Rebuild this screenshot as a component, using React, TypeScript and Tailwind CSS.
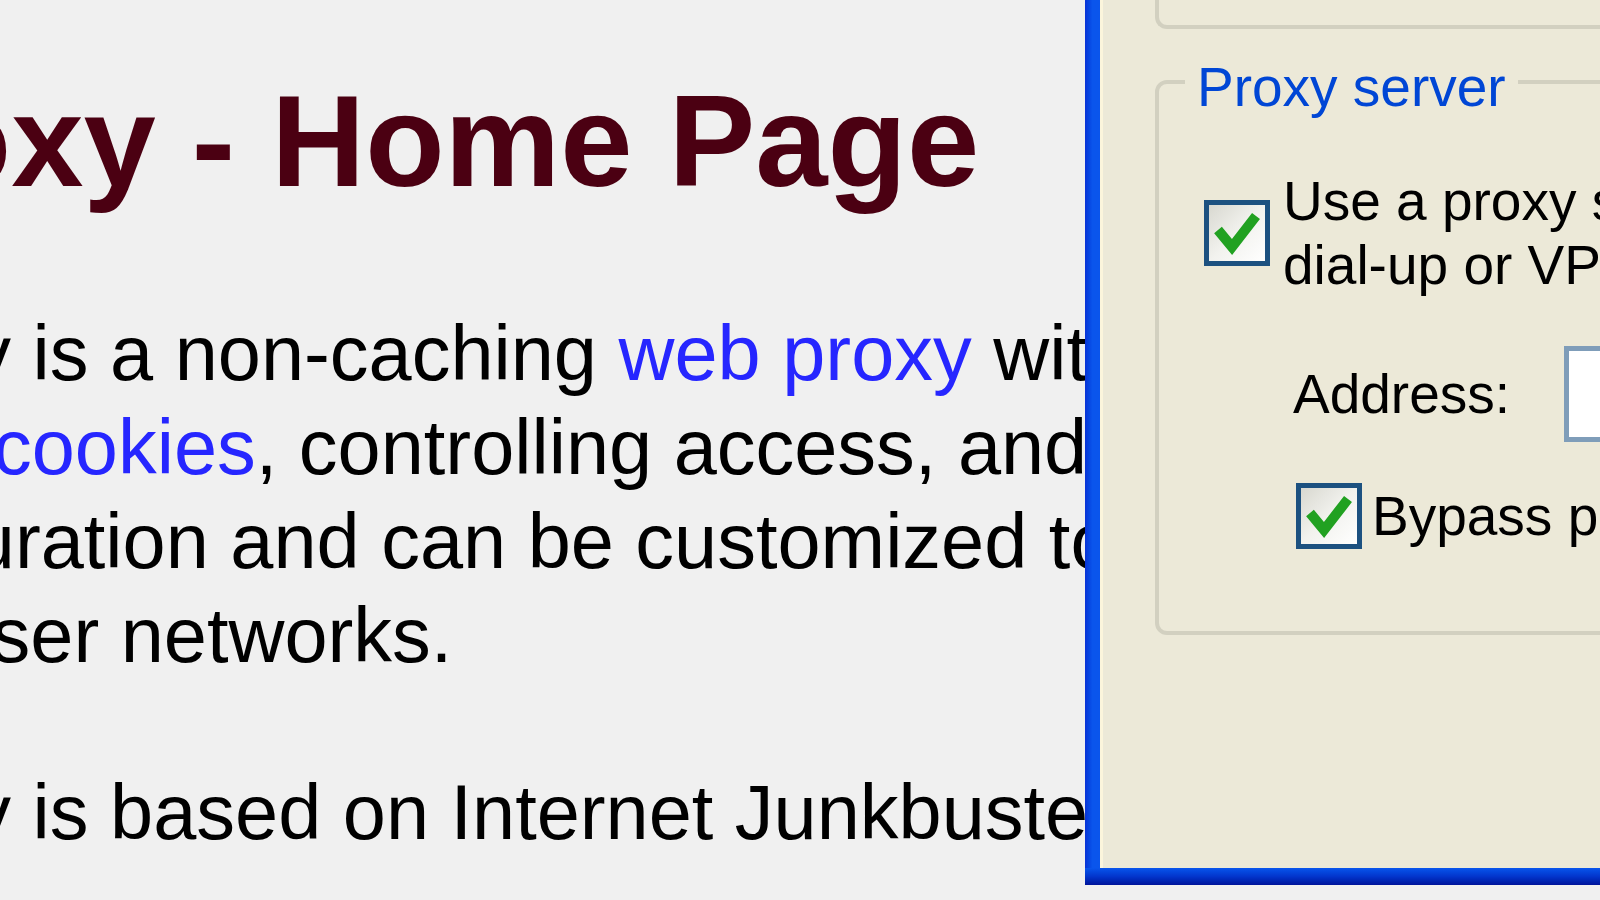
const SANS = "font-['Liberation_Sans',Arial,sans-serif]";

function XpCheckbox() {
  return (
    <div className="flex size-[66px] shrink-0 items-center justify-center border-[5px] border-[#1c5180] bg-linear-to-br from-[#d8d8d0] via-[#f2f2ee] to-white">
      <svg width="56" height="56" viewBox="0 0 56 56" fill="none">
        <polyline points="9,25 23,42 47,11" stroke="#21a121" strokeWidth="10" strokeLinejoin="miter" />
      </svg>
    </div>
  );
}

function PageText() {
  return (
    <div className={`w-[1085px] shrink-0 overflow-hidden pt-[76px] text-black ${SANS}`}>
      <h1 className="ml-[-314px] whitespace-nowrap text-[130px] font-bold leading-[130px] text-[#4b0012]">
        Privoxy - Home Page
      </h1>

      <div className="mt-[100px] text-[77.5px] leading-[94px]">
        <div className="ml-[-243px] whitespace-nowrap">
          Privoxy is a non-caching <span className="text-[#2626ff]">web proxy</span> with filtering capabilities
        </div>
        <div className="ml-[-468px] whitespace-nowrap">
          manipulating <span className="text-[#2626ff]">cookies</span>, controlling access, and removing ads
        </div>
        <div className="ml-[-235px] whitespace-nowrap">
          configuration and can be customized to suit individual needs
        </div>
        <div className="ml-[-241px] whitespace-nowrap">multi-user networks.</div>
      </div>

      <p className="ml-[-243px] mt-[83px] whitespace-nowrap text-[77.5px] leading-[94px]">
        Privoxy is based on Internet Junkbuster.
      </p>
    </div>
  );
}

function ProxyDialog() {
  return (
    <div className={`flex h-[885px] flex-1 flex-col ${SANS}`}>
      <div className="flex min-h-0 flex-1">
        {/* window frame, left edge */}
        <div className="w-[15px] shrink-0 bg-linear-to-r from-[#0832d6] via-[#0a55ec] to-[#0a55ec]" />
        <div className="w-[3px] shrink-0 bg-[#fbf5dc]" />
        <div className="min-w-0 flex-1 overflow-hidden bg-[#ece9d8] pl-[52px] text-[55px] leading-[64px] text-black">
          {/* bottom of the group above */}
          <div className="h-[29px] w-[700px] rounded-bl-[12px] border-b-4 border-l-4 border-[#d2d0c0]" />

          {/* Proxy server group */}
          <div className="relative mt-[51px] h-[555px] w-[700px] rounded-[12px] border-4 border-[#d2d0c0] pl-[45px] pt-[85px]">
            <span className="absolute left-[26px] top-[-29px] bg-[#ece9d8] px-[12px] text-[#0046d5]">Proxy server</span>

            <div className="flex items-center gap-[13px]">
              <XpCheckbox />
              <div className="whitespace-nowrap">
                <div>Use a proxy server for your LAN (These settings will not apply to</div>
                <div>dial-up or VPN connections).</div>
              </div>
            </div>

            <div className="ml-[89px] mt-[49px] flex h-[96px] items-center">
              <span className="w-[271px] shrink-0 whitespace-nowrap">Address:</span>
              <div className="h-[96px] w-[400px] shrink-0 border-[5px] border-[#7f9db9] bg-white" />
            </div>

            <div className="ml-[92px] mt-[41px] flex items-center gap-[10px]">
              <XpCheckbox />
              <span className="whitespace-nowrap">Bypass proxy server for local addresses</span>
            </div>
          </div>
        </div>
      </div>
      {/* window frame, bottom edge */}
      <div className="flex h-[17px] shrink-0">
        <div className="h-full flex-1 bg-linear-to-b from-[#0a55ec] via-[#0335cc] to-[#00139a]" />
      </div>
    </div>
  );
}

export default function App() {
  return (
    <div className="flex h-[900px] w-[1600px] overflow-hidden bg-[#f0f0f0]">
      <PageText />
      <ProxyDialog />
    </div>
  );
}
